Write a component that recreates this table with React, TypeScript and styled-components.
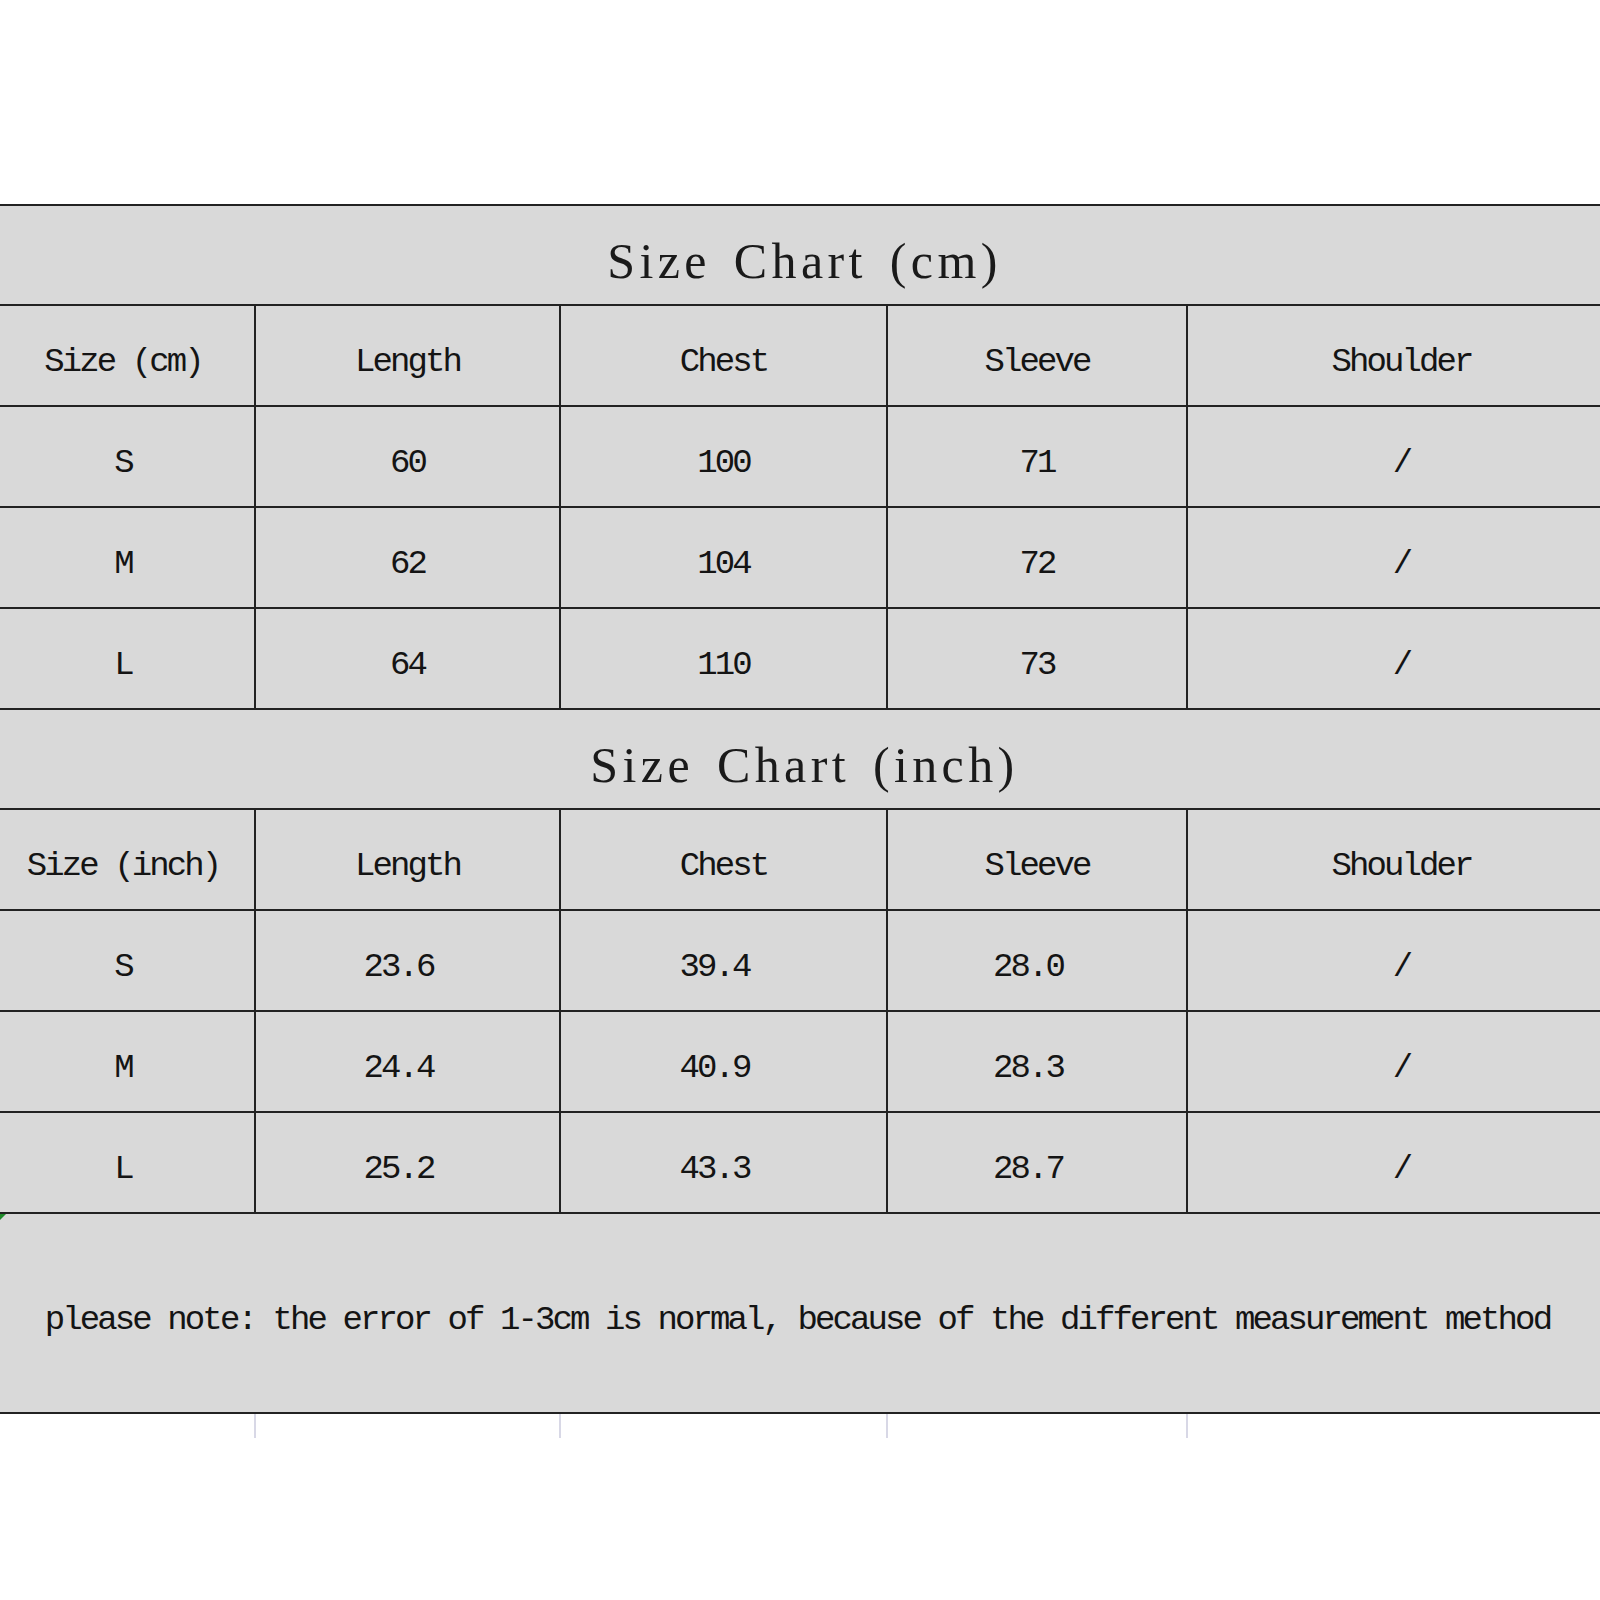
import React from "react";
import styled, { createGlobalStyle } from "styled-components";

type SizeRow = {
  size: string;
  values: string[];
};

type Chart = {
  title: string;
  sizeLabel: string;
  rows: SizeRow[];
  shifted?: boolean;
};

const headers = ["Length", "Chest", "Sleeve", "Shoulder"];

const charts: Chart[] = [
  {
    title: "Size Chart (cm)",
    sizeLabel: "Size (cm)",
    rows: [
      { size: "S", values: ["60", "100", "71", "/"] },
      { size: "M", values: ["62", "104", "72", "/"] },
      { size: "L", values: ["64", "110", "73", "/"] },
    ],
  },
  {
    title: "Size Chart (inch)",
    sizeLabel: "Size (inch)",
    shifted: true,
    rows: [
      { size: "S", values: ["23.6", "39.4", "28.0", "/"] },
      { size: "M", values: ["24.4", "40.9", "28.3", "/"] },
      { size: "L", values: ["25.2", "43.3", "28.7", "/"] },
    ],
  },
];

const columns = "262px 305px 327px 300px 429px";

const GlobalStyle = createGlobalStyle`
  body {
    margin: 0;
    background: #ffffff;
    overflow-x: hidden;
  }
`;

const Page = styled.div`
  width: 1600px;
  padding-top: 204px;
  overflow: hidden;
  font-family: "Liberation Mono", "DejaVu Sans Mono", monospace;
  color: #141414;
`;

const Sheet = styled.div`
  margin-left: -8px;
  width: 1623px;
  border-top: 2px solid #222;
  background: #d9d9d9;
`;

const TitleRow = styled.div`
  height: 100px;
  box-sizing: border-box;
  border-bottom: 2px solid #222;
  display: flex;
  align-items: center;
  justify-content: center;
  padding: 12px 0 0 2px;
  font-family: "Liberation Serif", "DejaVu Serif", serif;
  font-size: 50px;
  letter-spacing: 4.4px;
  word-spacing: 6px;
  color: #1a1a1a;
`;

const Row = styled.div`
  display: grid;
  grid-template-columns: ${columns};
  height: 101px;
  box-sizing: border-box;
  border-bottom: 2px solid #222;
`;

const Cell = styled.div<{ $shift?: boolean }>`
  display: flex;
  align-items: center;
  justify-content: center;
  padding-top: 12px;
  padding-right: ${(p) => (p.$shift ? "18px" : "0")};
  border-left: 2px solid #222;
  font-size: 34px;
  letter-spacing: -2.9px;
  white-space: pre;

  &:first-child {
    border-left: none;
  }
`;

const NoteRow = styled.div`
  position: relative;
  height: 200px;
  box-sizing: border-box;
  border-bottom: 2px solid #222;
  display: flex;
  align-items: center;
  justify-content: center;
  padding: 14px 12px 0 0;
  font-size: 34px;
  letter-spacing: -2.9px;
  white-space: pre;

  &::before {
    content: "";
    position: absolute;
    left: 8px;
    top: 0;
    border-top: 6px solid #1f8a2a;
    border-right: 6px solid transparent;
  }
`;

const Tail = styled.div`
  margin-left: -8px;
  width: 1623px;
  display: grid;
  grid-template-columns: ${columns};
  height: 24px;
`;

const TailCell = styled.div`
  border-left: 2px solid #d8d8e6;

  &:first-child {
    border-left: none;
  }
`;

const App: React.FC = () => {
  return (
    <Page>
      <GlobalStyle />
      <Sheet>
        {charts.map((chart) => (
          <React.Fragment key={chart.title}>
            <TitleRow>{chart.title}</TitleRow>
            <Row>
              <Cell>{chart.sizeLabel}</Cell>
              {headers.map((h) => (
                <Cell key={h}>{h}</Cell>
              ))}
            </Row>
            {chart.rows.map((row) => (
              <Row key={row.size}>
                <Cell>{row.size}</Cell>
                {row.values.map((v, i) => (
                  <Cell key={i} $shift={chart.shifted && v !== "/"}>
                    {v}
                  </Cell>
                ))}
              </Row>
            ))}
          </React.Fragment>
        ))}
        <NoteRow>
          please note: the error of 1-3cm is normal, because of the different
          measurement method
        </NoteRow>
      </Sheet>
      <Tail>
        {columns.split(" ").map((c, i) => (
          <TailCell key={i} />
        ))}
      </Tail>
    </Page>
  );
};

export default App;
